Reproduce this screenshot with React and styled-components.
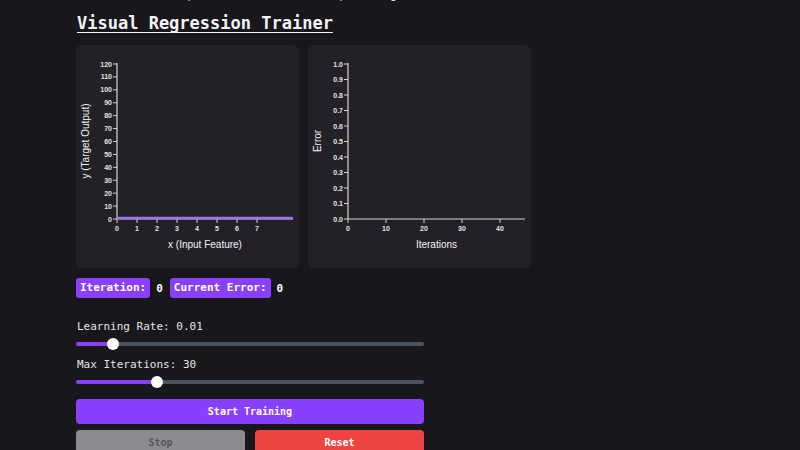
import React, { useState } from 'react';
import styled, { createGlobalStyle } from 'styled-components';

const GlobalStyle = createGlobalStyle`
  html, body {
    margin: 0;
    padding: 0;
    background: #18171c;
    overflow: hidden;
  }
  body {
    font-family: "DejaVu Sans Mono", "Liberation Mono", monospace;
    color: #e5e5e5;
  }
`;

const Page = styled.div`
  padding: 0 0 0 76px;
  display: flex;
  flex-direction: column;
  align-items: flex-start;
`;

const Intro = styled.p`
  margin: -15px 0 0 -4px;
  font-size: 12px;
  line-height: 18px;
  color: #d4d4d8;
  white-space: nowrap;
`;

const Title = styled.h1`
  margin: 9px 0 0 1px;
  font-size: 17px;
  line-height: 22px;
  font-weight: 600;
  color: #f4f4f5;
  text-decoration: underline;
  text-underline-offset: 3px;
  text-decoration-thickness: 1px;
`;

const ChartRow = styled.div`
  display: flex;
  gap: 9px;
  margin-top: 11px;
`;

const Card = styled.div`
  width: 223px;
  height: 223px;
  background: #232127;
  border-radius: 6px;
  overflow: hidden;
`;

const Stats = styled.div`
  display: flex;
  align-items: center;
  margin-top: 10px;
  font-size: 11px;
`;

const Badge = styled.span`
  background: #8a3ffc;
  color: #fff;
  border-radius: 3px;
  padding: 0 4px;
  height: 20px;
  line-height: 20px;
  font-weight: 600;
`;

const StatValue = styled.span`
  color: #fff;
  font-weight: 600;
  margin: 0 7px 0 6px;
`;

const Controls = styled.div`
  width: 348px;
  display: flex;
  flex-direction: column;
  margin-top: 22px;
`;

const Label = styled.label`
  font-size: 11px;
  line-height: 14px;
  color: #e4e4e7;
  margin-left: 1px;
`;

const Range = styled.input`
  -webkit-appearance: none;
  appearance: none;
  width: 348px;
  height: 4px;
  margin: 8px 0 12px 0;
  border-radius: 2px;
  outline: none;

  &::-webkit-slider-thumb {
    -webkit-appearance: none;
    appearance: none;
    width: 12px;
    height: 12px;
    border-radius: 50%;
    background: #ffffff;
    border: none;
  }
`;

const Button = styled.button`
  height: 25px;
  border: none;
  border-radius: 4px;
  font-family: "DejaVu Sans Mono", "Liberation Mono", monospace;
  font-size: 10px;
  font-weight: 700;
  color: ${p => p.$muted ? '#56555b' : '#ffffff'};
  background: ${p => p.$color};
  cursor: pointer;
`;

const StartButton = styled(Button)`
  margin-top: 3px;
`;

const ButtonRow = styled.div`
  display: grid;
  grid-template-columns: 1fr 1fr;
  gap: 10px;
  margin-top: 6px;
`;

const Slider = ({ label, min, max, step, value, onChange }) => {
  const pct = ((value - min) / (max - min)) * 100;
  const pos = `calc(6px + (100% - 12px) * ${pct / 100})`;
  return (
    <>
      <Label>{label}: {value}</Label>
      <Range
        type="range"
        min={min}
        max={max}
        step={step}
        value={value}
        onChange={e => onChange(Number(e.target.value))}
        style={{ background: `linear-gradient(to right, #8a3ffc 0, #8a3ffc ${pos}, #4b5361 ${pos}, #4b5361 100%)` }}
      />
    </>
  );
};

const AXIS = '#d4d4d4';
const TICK_TEXT = '#e4e4e4';

const Chart = ({ axisX, yTicks, xTicks, xStep, xLabel, yLabel, line }) => {
  const top = 19;
  const bottom = 174;
  const right = 217;
  const yGap = (bottom - top) / (yTicks.length - 1);
  return (
    <svg width="223" height="223" fontFamily='"Liberation Sans", Arial, sans-serif'>
      <line x1={axisX} y1={top - 1} x2={axisX} y2={bottom} stroke={AXIS} strokeWidth="1.2" />
      <line x1={axisX} y1={bottom} x2={right} y2={bottom} stroke={AXIS} strokeWidth="1.2" />
      {yTicks.map((t, i) => {
        const y = bottom - i * yGap;
        return (
          <g key={t}>
            <line x1={axisX - 4} y1={y} x2={axisX} y2={y} stroke={AXIS} />
            <text x={axisX - 5} y={y + 2.5} fontSize="7" fontWeight="700" fill={TICK_TEXT} textAnchor="end">{t}</text>
          </g>
        );
      })}
      {xTicks.map((t, i) => {
        const x = axisX + i * xStep;
        return (
          <g key={t}>
            <line x1={x} y1={bottom} x2={x} y2={bottom + 4} stroke={AXIS} />
            <text x={x} y={bottom + 12} fontSize="7" fontWeight="700" fill={TICK_TEXT} textAnchor="middle">{t}</text>
          </g>
        );
      })}
      {line && (
        <line x1={axisX} y1={bottom - 1} x2={right} y2={bottom - 1} stroke="#a070f0" strokeWidth="2.5" />
      )}
      <text x={(axisX + right) / 2} y={203} fontSize="10" fill="#f2f2f2" textAnchor="middle">{xLabel}</text>
      <text
        transform={`translate(13 ${96}) rotate(-90)`}
        fontSize="10"
        fill="#f2f2f2"
        textAnchor="middle"
      >
        {yLabel}
      </text>
    </svg>
  );
};

export default function App() {
  const [rate, setRate] = useState(0.01);
  const [iters, setIters] = useState(30);

  return (
    <Page>
      <GlobalStyle />
      <Intro>Such metrics help to evaluate and compare regression models.</Intro>
      <Title>Visual Regression Trainer</Title>

      <ChartRow>
        <Card>
          <Chart
            axisX={41}
            yTicks={[0, 10, 20, 30, 40, 50, 60, 70, 80, 90, 100, 110, 120]}
            xTicks={[0, 1, 2, 3, 4, 5, 6, 7]}
            xStep={20}
            xLabel="x (Input Feature)"
            yLabel="y (Target Output)"
            line
          />
        </Card>
        <Card>
          <Chart
            axisX={40}
            yTicks={['0.0', '0.1', '0.2', '0.3', '0.4', '0.5', '0.6', '0.7', '0.8', '0.9', '1.0']}
            xTicks={[0, 10, 20, 30, 40]}
            xStep={38}
            xLabel="Iterations"
            yLabel="Error"
          />
        </Card>
      </ChartRow>

      <Stats>
        <Badge>Iteration:</Badge>
        <StatValue>0</StatValue>
        <Badge>Current Error:</Badge>
        <StatValue>0</StatValue>
      </Stats>

      <Controls>
        <Slider label="Learning Rate" min={0.001} max={0.1} step={0.001} value={rate} onChange={setRate} />
        <Slider label="Max Iterations" min={10} max={100} step={1} value={iters} onChange={setIters} />
        <StartButton $color="#8a3ffc">Start Training</StartButton>
        <ButtonRow>
          <Button $color="#8c8b90" $muted>Stop</Button>
          <Button $color="#ef4444">Reset</Button>
        </ButtonRow>
      </Controls>
    </Page>
  );
}
